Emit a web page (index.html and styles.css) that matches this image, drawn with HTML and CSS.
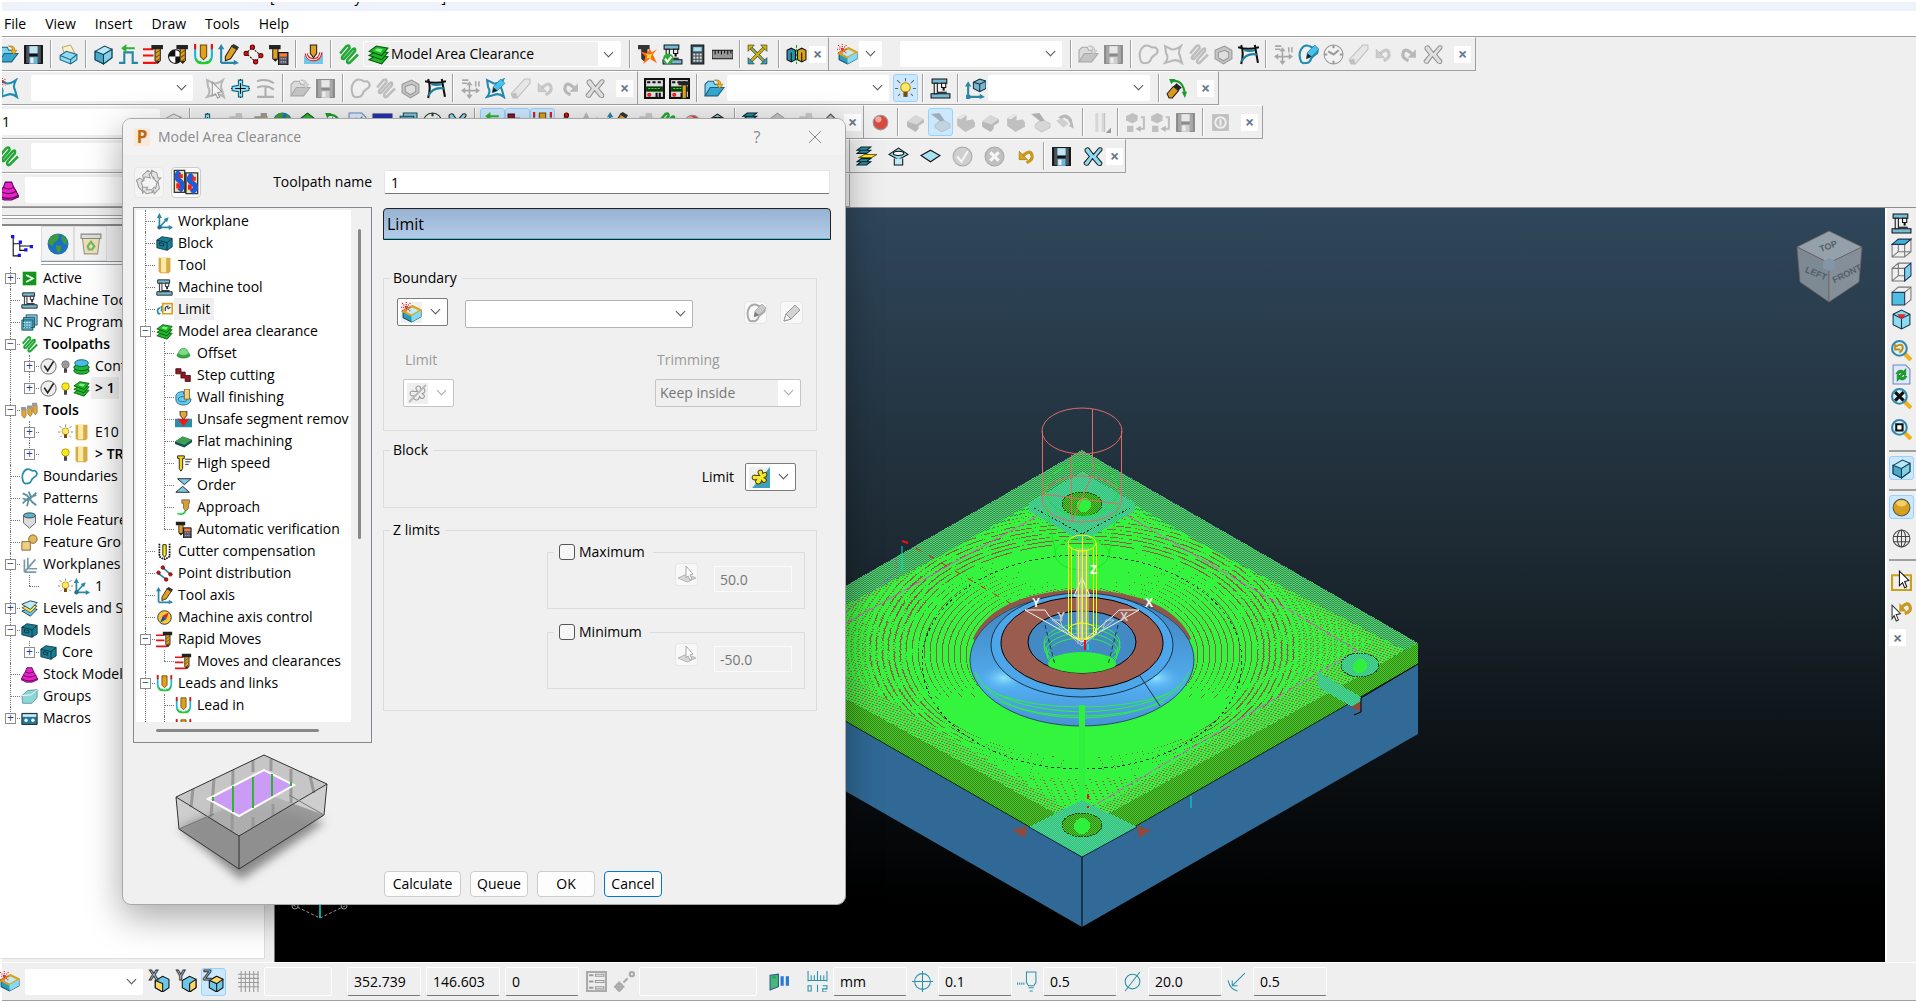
FILE: index.html
```html
<!DOCTYPE html>
<html lang="en">
<head>
<meta charset="utf-8">
<title>Model Area Clearance</title>
<link rel="stylesheet" href="styles.css">
</head>
<body>
<svg class="defs" aria-hidden="true">
<symbol id="open" viewBox="0 0 20 20"><path d="M1 17V6l3-3h5l1 3h5v4" fill="#7fd3ee" stroke="#1b5f7c"/><path d="M1 17 6 9h13l-6 8z" fill="#35a6cf" stroke="#1b5f7c"/><path d="M10 2q6-1 6 4h2l-3 4-3-4h2q0-3-4-4z" fill="#f4b51e" stroke="#9a6c00" stroke-width=".6"/></symbol>
<symbol id="save" viewBox="0 0 20 20"><path d="M1 1h18v18H1z" fill="#111"/><path d="M3 2h3v16H3zM14 2h3v16h-3z" fill="#4a5560"/><path d="M6 2h8v7H6z" fill="#bfe6f7"/><path d="M6 12h8v7H6z" fill="#6db6d6"/><path d="M7 13h3v5H7z" fill="#eee"/></symbol>
<symbol id="print" viewBox="0 0 20 20"><path d="M6 9 4 3l8-2 4 8z" fill="#fdf1c9" stroke="#a08848" stroke-width=".7"/><path d="m2 11 6-4 10 3v5l-6 4-10-4z" fill="#8fdaf5" stroke="#1f6685"/><path d="m2 11 10 4 6-5M12 15v4" fill="none" stroke="#1f6685"/></symbol>
<symbol id="block" viewBox="0 0 20 20"><path d="M2 7 11 2l7 3v8l-8 6-8-4z" fill="#b8e8f7" stroke="#0f3f54"/><path d="m2 7 8 3v9l-8-4z" fill="#4aa9c8" stroke="#0f3f54"/><path d="m10 10 8-5v8l-8 6z" fill="#86cfe6" stroke="#0f3f54"/></symbol>
<symbol id="feed" viewBox="0 0 20 20"><path d="M1 18h5V8h8v10h5" fill="none" stroke="#2587a8" stroke-width="2"/><path d="M16 5H8V8L3 4l5-4v3h8z" fill="#2db32d"/></symbol>
<symbol id="mill" viewBox="0 0 20 20"><path d="M8 1h11v4h-2v11l-3 3-3-3V5H8z" fill="#222"/><path d="M12 5h4v11h-4z" fill="#e0a020"/><path d="m12 9 4-3M12 13l4-3M12 17l4-3" stroke="#7a5200"/></symbol>
<symbol id="rapid" viewBox="0 0 20 20"><path d="M0 5h10M0 11h10M0 18h13" stroke="#f01010" stroke-width="2"/><use href="#mill"/></symbol>
<symbol id="half" viewBox="0 0 20 20"><circle cx="7" cy="12" r="6.500" fill="#fff" stroke="#111"/><path d="M7 12V5.500A6.500 6.500 0 0 0 .5 12zM7 12v6.500A6.500 6.500 0 0 0 13.500 12z" fill="#111"/><use href="#mill"/></symbol>
<symbol id="leads" viewBox="0 0 20 20"><path d="M2 1v10q0 7 6 6" fill="none" stroke="#18b8dc" stroke-width="2"/><path d="M18 1v10q0 7-6 6" fill="none" stroke="#18b8dc" stroke-width="2"/><path d="M3 14q1 5 7 4 6 1 7-4" fill="none" stroke="#22cc22" stroke-width="2"/><path d="M1 0h2v5H1zM17 0h2v5h-2z" fill="#f01010"/><path d="M7 1h6v11l-3 3-3-3z" fill="#e0a020" stroke="#6b4a00"/></symbol>
<symbol id="axis" viewBox="0 0 20 20"><path d="M4 17V3M4 17h14M4 17 12 8" stroke="#2a87a8" stroke-width="2" fill="none"/><path d="m1 6 3-6 3 6zM15 14l5 3-5 3zM9 7l6-2-2 6z" fill="#2a87a8"/><circle cx="4" cy="17" r="2.500" fill="#2a6f88"/></symbol>
<symbol id="taxis" viewBox="0 0 20 20"><path d="M3 18V3M3 18h15" stroke="#2a87a8" stroke-width="2" fill="none"/><path d="m0 5 3-5 3 5zM15 15l5 3-5 2z" fill="#2a87a8"/><path d="m7 12 6-10 5 3-6 9-5 2z" fill="#e0a020" stroke="#222"/><path d="m12 2 3-2 5 3-2 3z" fill="#333"/></symbol>
<symbol id="points" viewBox="0 0 20 20"><path d="M8 4 3 9l8 7M9 4l8 7-5 6" fill="none" stroke="#111" stroke-dasharray="2 1"/><g fill="#d81818" stroke="#600"><circle cx="9" cy="3" r="2"/><circle cx="3" cy="9" r="2"/><circle cx="12" cy="17" r="2"/><circle cx="17" cy="11" r="2"/></g></symbol>
<symbol id="pdist" viewBox="0 0 20 20"><path d="m3 10 9 7M8 3l9 8" stroke="#2a87a8" stroke-width="2"/><g fill="#d81818" stroke="#600"><circle cx="8" cy="3" r="2"/><circle cx="3" cy="9" r="2"/><circle cx="12" cy="17" r="2"/><circle cx="17" cy="11" r="2"/></g></symbol>
<symbol id="tcalc" viewBox="0 0 20 20"><path d="M1 1h11v4h-2v9l-3 3-3-3V5H1z" fill="#222"/><path d="M5 5h4v9H5z" fill="#e0a020"/><path d="M10 8h9v12h-9z" fill="#556" stroke="#111"/><path d="M11 9h7v3h-7z" fill="#ff7b30"/><path d="M12 14h6M12 17h6" stroke="#ddd" stroke-dasharray="1 1"/></symbol>
<symbol id="touch" viewBox="0 0 20 20"><path d="M1 10v9h18V7q-3 10-9 9-6 1-9-6z" fill="#6cc8ea"/><path d="M2 9q1 7 8 7t8-8M4 9q1 5 6 5t6-6" fill="none" stroke="#f01010"/><path d="M7 1h6v8l-3 4-3-4z" fill="#e0a020" stroke="#222"/></symbol>
<symbol id="path" viewBox="0 0 20 20"><path d="M2 9 8 2q3-2 3 2l-7 8q-1 3 2 2l8-9q3-2 2 2l-7 8q-1 4 2 3l8-8" fill="none" stroke="#23a838" stroke-width="2.400" stroke-linejoin="round"/></symbol>
<symbol id="layers" viewBox="0 0 20 20"><g fill="#22b52c" stroke="#045a0a"><path d="m1 15 6-4 12 1-6 7z"/><path d="m1 11 6-4 12 1-6 7z"/><path d="m1 7 7-5 11 2-6 7z"/></g><path d="m6 6 3-2 5 1-2 3z" fill="#7cf07c"/></symbol>
<symbol id="crash" viewBox="0 0 20 20"><path d="M1 1h11v4h-2v9l-3 3-3-3V5H1z" fill="#333"/><path d="m19 5-4 5 4 8-7-4-6 5 2-7-5-5 7 2 2-5 2 4z" fill="#ff6a10"/><path d="m15 9-2 3 1 3-3-2-2 1 1-3-2-2 3 1z" fill="#ffe040"/></symbol>
<symbol id="machine" viewBox="0 0 20 20"><path d="M2 1h14v4H2zM1 15h18v4H1z" fill="#78bcd4" stroke="#111"/><path d="M4 5h3v10H4zM11 5h4v4h-4z" fill="#eee" stroke="#111"/><path d="M13 9v3" stroke="#111" stroke-width="2"/><path d="M7 13h9v2H7z" fill="#333"/></symbol>
<symbol id="machok" viewBox="0 0 20 20"><use href="#machine"/><circle cx="6" cy="14" r="5" fill="#2dac35"/><path d="m3 14 2 3 4-5" stroke="#fff" fill="none" stroke-width="2"/></symbol>
<symbol id="calc" viewBox="0 0 20 20"><path d="M4 1h12v18H4z" fill="#3c4a52" stroke="#111"/><path d="M6 3h8v4H6z" fill="#a9dff0"/><path d="M6 10h9M6 13h9M6 16h9" stroke="#ddd" stroke-width="2" stroke-dasharray="2 1"/></symbol>
<symbol id="ruler" viewBox="0 0 20 20"><path d="M0 6h20v8H0z" fill="#999" stroke="#111"/><path d="M3 6v4M6 6v3M9 6v4M12 6v3M15 6v4M18 6v3" stroke="#111"/></symbol>
<symbol id="expand" viewBox="0 0 20 20"><path d="m3 3 14 14M17 3 3 17" stroke="#333" stroke-width="3"/><path d="m3 3 14 14" stroke="#9ab04a" stroke-width="2"/><path d="M17 3 3 17" stroke="#d6b900" stroke-width="2"/><path d="M1 7V1h6zM19 7V1h-6z" fill="#d6b900" stroke="#333" stroke-width=".6"/><path d="M1 13v6h6zM19 13v6h-6z" fill="#2aa0c8" stroke="#333" stroke-width=".6"/></symbol>
<symbol id="blocks" viewBox="0 0 20 20"><path d="m1 6 4-2 4 2v9l-4 2-4-2z" fill="#2e8fb0" stroke="#111"/><path d="m11 6 4-2 4 2v9l-4 2-4-2z" fill="#e0a020" stroke="#111"/><path d="M5 8v9M15 8v9" stroke="#111"/><path d="M10 1v18" stroke="#1a1" stroke-dasharray="3 1"/></symbol>
<symbol id="bdnew" viewBox="0 0 20 20"><path d="m2 9 9-5 8 4v6l-9 5-8-4z" fill="#2a9cc0" stroke="#0f4f66"/><path d="m2 9 9-5 8 4-9 5z" fill="#bfeaf7" stroke="#d9a41c" stroke-width="2"/><path d="m10 13v6l9-5V8z" fill="#86daf2"/><path d="M5 0v10M0 5h10M1 1l8 8M9 1 1 9" stroke="#e01010" stroke-dasharray="1 1"/></symbol>
<symbol id="bound" viewBox="0 0 20 20"><path d="M3 17Q0 10 3 5q3-5 8-3 2 2 5 1 4 2 2 6-3 2-5 4-2 6-6 5-2 1-4-1z" fill="none" stroke="#218bb0" stroke-width="2"/></symbol>
<symbol id="star" viewBox="0 0 20 20"><path d="m2 2 6 3q3 1 9-3-3 6-1 9l2 7q-5-4-9-2l-7 2q4-5 1-9z" fill="none" stroke="#218bb0" stroke-width="2"/></symbol>
<symbol id="starnew" viewBox="0 0 20 20"><use href="#star"/><path d="M4 0v8M0 4h8M1 1l6 6M7 1 1 7" stroke="#e01010" stroke-dasharray="1 1"/></symbol>
<symbol id="starcur" viewBox="0 0 20 20"><use href="#star"/><path d="m7 4 9 9-4 1 2 4-2 1-2-4-3 2z" fill="#fff" stroke="#333"/></symbol>
<symbol id="cross" viewBox="0 0 20 20"><path d="M10 1v18M1 10h18" stroke="#111"/><path d="M8 2h4v5l6 1v4l-6 1v5H8v-5l-6-1V8l6-1z" fill="#8fdcf2" stroke="#125d78"/><path d="M5 10h10M10 5v10" stroke="#111"/></symbol>
<symbol id="flow" viewBox="0 0 20 20"><path d="M2 3q9-3 16 2M2 9q9-3 16 2M2 18h16M10 17V8" fill="none" stroke="#567" stroke-width="2"/></symbol>
<symbol id="cube" viewBox="0 0 20 20"><path d="m2 6 9-4 7 4v8l-8 5-8-5z" fill="#4aa9c6" stroke="#134"/><path d="m5 8 6-2 4 2v5l-5 3-5-3z" fill="#bcd" stroke="#134"/></symbol>
<symbol id="curve" viewBox="0 0 20 20"><path d="M3 19Q6 9 3 1M0 3q10 3 20 0M16 1l3 17" fill="none" stroke="#111" stroke-width="2"/><path d="M3 17Q8 8 18 10M6 6q5 1 10 0" fill="none" stroke="#1f7f9e" stroke-width="2"/></symbol>
<symbol id="move" viewBox="0 0 20 20"><path d="M9 5v13M3 12h14M2 2h6M2 5h5M15 3v5M18 3v5" stroke="#456" stroke-width="1.500"/><path d="M9 3 6 7h6zM9 20l-3-4h6zM1 12l4-3v6zM19 12l-4-3v6z" fill="#456"/></symbol>
<symbol id="pencil" viewBox="0 0 20 20"><path d="m2 18 2-7 9-9 5 5-9 9z" fill="#bbb" stroke="#555"/><path d="m2 18 2-7 5 5z" fill="#fff" stroke="#555"/></symbol>
<symbol id="bdpen" viewBox="0 0 20 20"><use href="#bound"/><path d="m8 14 1-6 7-7 4 4-7 7z" fill="#48c0ee" stroke="#17698a" stroke-width=".6"/><path d="m8 14 1-5 4 3z" fill="#222"/></symbol>
<symbol id="starpen" viewBox="0 0 20 20"><use href="#star"/><path d="m7 14 1-6 7-7 4 4-7 7z" fill="#48c0ee" stroke="#17698a" stroke-width=".6"/><path d="m7 14 1-5 4 3z" fill="#222"/></symbol>
<symbol id="clock" viewBox="0 0 20 20"><circle cx="10" cy="10" r="9" fill="#eefaf0" stroke="#333"/><path d="M5 7l5 3 5-4M10 1v3M10 16v3M1 10h3M16 10h3" fill="none" stroke="#333" stroke-width="2"/></symbol>
<symbol id="eraser" viewBox="0 0 20 20"><path d="M1 15 14 1h5v4L7 19H3z" fill="#ddd" stroke="#888"/><path d="m1 15 5-1 1 5H3z" fill="#888"/></symbol>
<symbol id="undo" viewBox="0 0 20 20"><path d="M6 10q7-7 9-2t-5 8" fill="none" stroke="#c9981c" stroke-width="3"/><path d="M3 5v8h8z" fill="#d9a41c" stroke="#8a6500" stroke-width=".5"/></symbol>
<symbol id="redo" viewBox="0 0 20 20"><path d="M14 10Q7 3 5 8t5 8" fill="none" stroke="#777" stroke-width="3"/><path d="M17 5v8H9z" fill="#777"/></symbol>
<symbol id="del" viewBox="0 0 20 20"><path d="M2 3q3-3 5 1l3 4 5-6q4-1 3 2l-5 6 5 6q0 4-4 2l-5-6-4 6q-4 1-4-2l5-6-4-5z" fill="#8fdcf2" stroke="#222"/></symbol>
<symbol id="keypad" viewBox="0 0 20 20"><path d="M0 0h20v20H0z" fill="#111"/><path d="M2 2h16v16H2z" fill="#ddd"/><path d="M3 4h14" stroke="#111" stroke-width="2" stroke-dasharray="3 2"/><path d="M2 8h16v5H2z" fill="#0a3a0a"/><path d="M4 10h12" stroke="#2e2" stroke-dasharray="2 1"/><circle cx="5" cy="16" r="2" fill="#e22"/><path d="M12 14v4M15 14v4" stroke="#111" stroke-width="2"/></symbol>
<symbol id="keymill" viewBox="0 0 20 20"><use href="#keypad"/><path d="M9 3h10v4h-2v13h-5V7H9z" fill="#222"/><path d="M13 7h3v12h-3z" fill="#e0a020"/></symbol>
<symbol id="lamp" viewBox="0 0 20 20"><path d="M10 0v3M2 2l3 3M18 2l-3 3M0 10h3M17 10h3M3 17l2-2M17 17l-2-2" stroke="#666"/><circle cx="10" cy="9" r="4.500" fill="#ffe96a" stroke="#b58b00"/><path d="M8 13h4v5H8z" fill="#7a4a10"/></symbol>
<symbol id="bulb" viewBox="0 0 20 20"><circle cx="10" cy="8" r="5" fill="#f8e81c" stroke="#9a8a00"/><path d="M8 13h4v6H8z" fill="#444"/></symbol>
<symbol id="bulboff" viewBox="0 0 20 20"><circle cx="10" cy="8" r="5" fill="#999" stroke="#777"/><path d="M8 13h4v6H8z" fill="#444"/></symbol>
<symbol id="axcube" viewBox="0 0 20 20"><path d="M3 18V6M3 18h12" stroke="#2a87a8" stroke-width="2"/><path d="m0 8 3-5 3 5zM14 15l5 3-5 2zM1 16h4v4H1z" fill="#2a87a8"/><path d="m8 4 6-3 6 2v7l-6 3-6-3z" fill="#7bb6cc" stroke="#134"/><path d="m8 4 6 2 6-3M14 6v7" fill="none" stroke="#134"/></symbol>
<symbol id="rotate" viewBox="0 0 20 20"><path d="M6 3q10-2 12 12" fill="none" stroke="#1d9a2b" stroke-width="2"/><path d="M3 1h6L5 6zM15 13h5l-2 6z" fill="#1d9a2b"/><path d="m1 15 6-7 5 4-6 7H3z" fill="#d99a1c" stroke="#222"/><path d="m7 8 3-3 5 4-3 3z" fill="#222"/></symbol>
<symbol id="ball" viewBox="0 0 20 20"><circle cx="10" cy="10" r="7" fill="#d84a3e" stroke="#999"/><circle cx="8" cy="7" r="3" fill="#f7a79e"/></symbol>
<symbol id="gold" viewBox="0 0 20 20"><circle cx="10" cy="10" r="8" fill="#d5a01c" stroke="#555"/><ellipse cx="10" cy="6" rx="5" ry="3" fill="#f2cf6c"/></symbol>
<symbol id="sim" viewBox="0 0 20 20"><path d="m2 9 8-6 8 4v3l-5 3v3l-3 3-8-5z" fill="#777"/><path d="m2 9 8-6 8 4-7 5z" fill="#bbb"/></symbol>
<symbol id="simtop" viewBox="0 0 20 20"><path d="m5 12 6-5 8 4v4l-8 4-6-4z" fill="#bbb" stroke="#999"/><path d="m1 2 8-1 5 7-4 1z" fill="#666"/></symbol>
<symbol id="simcut" viewBox="0 0 20 20"><path d="m2 6 6-4 3 1v5l6-1 2 3v4l-9 5-8-6z" fill="#888"/><path d="m2 6 6-4 3 1-5 4z" fill="#ddd"/></symbol>
<symbol id="simrot" viewBox="0 0 20 20"><path d="M3 5q8-6 13 2l2 9-5-3 2-1-3-5q-4-3-6 0z" fill="#777"/><path d="m1 8 6-2 6 5-5 4z" fill="#aaa"/></symbol>
<symbol id="cyl" viewBox="0 0 20 20"><path d="M5 1h9v18H5z" fill="#bbb"/><path d="M8 1h3v18H8z" fill="#eee"/><path d="M14 1v18" stroke="#888"/><path d="M20 15v5h-5z" fill="#333"/></symbol>
<symbol id="loop" viewBox="0 0 20 20"><path d="m1 4 6-3 5 2v5L7 11 1 8zM2 13h6v6H2z" fill="#888"/><path d="M15 5h3v11h-6" fill="none" stroke="#888" stroke-width="2"/><path d="m10 16 5-3v6z" fill="#777"/></symbol>
<symbol id="power" viewBox="0 0 20 20"><path d="M2 2h16v16H2z" fill="#888"/><circle cx="10" cy="10" r="5" fill="none" stroke="#eee" stroke-width="2"/><path d="M10 7v6" stroke="#eee" stroke-width="2"/></symbol>
<symbol id="slices" viewBox="0 0 20 20"><g fill="#2d93a8" stroke="#08222a"><path d="m1 4 4-3h9l-4 3zM1 7l4-3h9l-4 3zM1 15l4-3h9l-4 3zM1 18l4-3h9l-4 3z"/></g><path d="m3 11 5-3h12l-5 3z" fill="#ffe73a" stroke="#776600"/></symbol>
<symbol id="hat" viewBox="0 0 20 20"><path d="m1 8 9-6 9 6-9 5z" fill="#8fdcf2" stroke="#111"/><ellipse cx="10" cy="7" rx="5" ry="2" fill="#fff" stroke="#111"/><path d="M6 12v6h8v-6" fill="#bfeaf7" stroke="#111"/></symbol>
<symbol id="diamond" viewBox="0 0 20 20"><path d="m1 9 9-5 9 5-9 6z" fill="#a8e2f5" stroke="#111"/></symbol>
<symbol id="okc" viewBox="0 0 20 20"><circle cx="10" cy="10" r="9" fill="#aaa" stroke="#555"/><path d="m5 10 4 5 6-10" fill="none" stroke="#fff" stroke-width="2"/></symbol>
<symbol id="noc" viewBox="0 0 20 20"><circle cx="10" cy="10" r="9" fill="#888" stroke="#555"/><path d="m6 6 8 8M14 6l-8 8" stroke="#fff" stroke-width="3"/></symbol>
<symbol id="stock" viewBox="0 0 20 20"><path d="M7 2h6l2 5 2 3 3 6-7 3H6l-6-3 3-6 2-3z" fill="#e822c8" stroke="#5a0050"/><path d="M5 7q5 3 10 0M3 11q7 4 14 0M1 15q9 5 18 0" fill="none" stroke="#5a0050"/></symbol>
<symbol id="green" viewBox="0 0 20 20"><path d="m1 8 9-7 9 7-4 8H5z" fill="#29b836" stroke="#064d0c"/></symbol>
<symbol id="table" viewBox="0 0 20 20"><path d="M1 2h18v16H1z" fill="#fff" stroke="#1a1a6a"/><path d="M1 2h18v5H1z" fill="#2233aa"/></symbol>
<symbol id="refresh" viewBox="0 0 20 20"><path d="M2 1h12l4 4v14H2z" fill="#dfe9ff" stroke="#6f83c0"/><path d="M5 9q3-5 7-2l2-2v5H9l2-1q-3-2-4 1zM15 12q-3 5-7 2l-2 2v-5h5l-2 1q3 2 4-1z" fill="#1e9a2b" stroke="#1e9a2b"/></symbol>
<symbol id="tree" viewBox="0 0 20 20"><path d="M2 2v17h6M2 8h6M8 6v8h5M8 10h10" fill="none" stroke="#111"/><path d="M0 0h3v3H0zM7 5h3v3H7zM17 9h3v3h-3zM12 12h3v3h-3zM6 17h3v3H6z" fill="#1414f0"/></symbol>
<symbol id="globe" viewBox="0 0 20 20"><circle cx="10" cy="10" r="9.500" fill="#1f6fc0"/><path d="M3 4q4-4 8-3l-1 5-4 3-1 3-4-3zM8 11l5 1-1 6-3-1zM14 2l4 4v5l-3-2-2-4z" fill="#3f9c35"/></symbol>
<symbol id="bin" viewBox="0 0 20 20"><path d="M2 3h16l-2 16H4z" fill="#f1dfae" stroke="#999"/><path d="M1 1h18v4H1z" fill="#ddd" stroke="#888"/><path d="m7 12 3-4 3 4-2 3H8z" fill="none" stroke="#6cb86c" stroke-width="2"/></symbol>
<symbol id="active" viewBox="0 0 20 20"><path d="M2 2h16v16H2z" fill="#109618"/><path d="m6 6 8 4-8 4" fill="none" stroke="#fff" stroke-width="2"/></symbol>
<symbol id="nc" viewBox="0 0 20 20"><path d="M6 1h13v12H6z" fill="#8fc8da" stroke="#134d60"/><path d="M3 4h13v12H3zM1 7h13v12H1z" fill="#57a7c0" stroke="#134d60"/><path d="M3 10h9M3 13h9M3 16h9" stroke="#e8f8ff" stroke-dasharray="2 1"/></symbol>
<symbol id="contour" viewBox="0 0 20 20"><g fill="#1fb83a" stroke="#064d0c"><ellipse cx="10" cy="15" rx="9" ry="4"/><ellipse cx="10" cy="11" rx="9" ry="4"/></g><ellipse cx="10" cy="6" rx="8" ry="4" fill="#48c0e0" stroke="#0f4f66"/></symbol>
<symbol id="tick" viewBox="0 0 20 20"><circle cx="10" cy="10" r="9" fill="#eee" stroke="#555"/><path d="m5 9 4 6 7-11" fill="none" stroke="#222" stroke-width="2"/></symbol>
<symbol id="tools" viewBox="0 0 20 20"><g fill="#e0a93a" stroke="#7a5a20" stroke-width=".7"><path d="M1 8h5v8l-2 3-3-3zM8 6h5v8l-2 3-3-3zM14 4h5v8l-2 3-3-3z"/></g><path d="M0 6h6v4H0zM7 4h6v4H7zM13 1h6v4h-6z" fill="#999"/></symbol>
<symbol id="endmill" viewBox="0 0 20 20"><path d="M3 1h14v16l-2 2H5l-2-2z" fill="#d8ac45"/><path d="M6 1h6v17H6z" fill="#fbe9a6"/></symbol>
<symbol id="pattern" viewBox="0 0 20 20"><path d="M2 4q6 2 8 6t8 8M2 16q6-8 16-10M9 2l3 7 6-6M2 10l7 2-2 7" fill="none" stroke="#5d8fa0" stroke-width="2"/></symbol>
<symbol id="hole" viewBox="0 0 20 20"><path d="M3 4v9l7 6 7-6V4" fill="#ddd" stroke="#555"/><ellipse cx="10" cy="4" rx="7" ry="3" fill="#5cb3cf" stroke="#333"/></symbol>
<symbol id="feat" viewBox="0 0 20 20"><circle cx="14" cy="6" r="5" fill="#e0b860" stroke="#7a5a20"/><path d="M1 9h10v10H1z" fill="#f0d080" stroke="#7a5a20"/></symbol>
<symbol id="wps" viewBox="0 0 20 20"><path d="M4 19V4M4 19h14M4 19 17 4M8 15V2M8 15h11" stroke="#7c9aa6" stroke-width="2"/></symbol>
<symbol id="levels" viewBox="0 0 20 20"><path d="m1 13 10-4 8 2-8 8z" fill="#6cc8ea" stroke="#134"/><path d="m1 9 10-4 8 2-8 8z" fill="#f4e04a" stroke="#554"/><path d="m1 5 10-4 8 2-8 8z" fill="#bfeaf7" stroke="#134"/></symbol>
<symbol id="model" viewBox="0 0 20 20"><path d="m1 6 6-4 12 2v10l-6 4-12-3z" fill="#1b7d92" stroke="#06323c"/><path d="m1 6 12 3 6-5M13 9v9M4 9l5 1v3l-5-1z" fill="none" stroke="#06323c"/></symbol>
<symbol id="group" viewBox="0 0 20 20"><path d="m1 9 7-6 11-1v9l-6 7H2z" fill="#8ed6d6" stroke="#5b8f9a"/><path d="m1 9 11-1 7-6" fill="none" stroke="#fff"/></symbol>
<symbol id="macro" viewBox="0 0 20 20"><path d="M1 4h18v13H1z" fill="#247a9a" stroke="#111"/><path d="M2 5h16v3H2z" fill="#cfeffa"/><circle cx="6" cy="12" r="2" fill="#fff"/><circle cx="14" cy="12" r="2" fill="#fff"/></symbol>
<symbol id="limit" viewBox="0 0 20 20"><path d="M5 8q-4 1-3 5t3 1M6 6q2 3 0 6" stroke="#2a87a8" stroke-width="2" fill="none"/><path d="M8 3h11v12H8z" fill="#fff" stroke="#d9a41c" stroke-width="2"/><path d="M11 12q-1-6 3-6-1 6 3 1" fill="none" stroke="#345" stroke-width="1.500"/></symbol>
<symbol id="offset" viewBox="0 0 20 20"><ellipse cx="10" cy="12" rx="8" ry="4" fill="#37a23f"/><path d="M4 11q1-7 6-7t6 7q-6 3-12 0z" fill="#7fdc84" stroke="#37a23f"/></symbol>
<symbol id="step" viewBox="0 0 20 20"><path d="M1 2h6v4h5v4h6v7h-6v-4H7V8H1z" fill="#8c1c24" stroke="#4a0a10"/></symbol>
<symbol id="wall" viewBox="0 0 20 20"><path d="M1 8q1-5 9-5v3l9 6q-1 7-10 7-8-1-8-7z" fill="#6cc8ea" stroke="#17698a"/><ellipse cx="9" cy="12" rx="5" ry="3" fill="none" stroke="#17698a"/><path d="M11 0h6v12h-6z" fill="#f0d080" stroke="#7a5a20"/></symbol>
<symbol id="unsafe" viewBox="0 0 20 20"><path d="M0 9h5l5 7 5-7h5v10H0z" fill="#2b8ea8"/><path d="m3 9h14l-7 9z" fill="#f01818"/><path d="M6 0h8v5l-4 5-4-5z" fill="#e0a93a" stroke="#222"/></symbol>
<symbol id="flat" viewBox="0 0 20 20"><path d="m0 10 9-6 11 4v3l-9 6-11-4z" fill="#154d5c"/><path d="m0 10 9-6 11 4-9 6z" fill="#3f9f50"/></symbol>
<symbol id="speed" viewBox="0 0 20 20"><path d="M3 1h8v3H9v12l-2 3-2-3V4H3z" fill="#f6d61c" stroke="#111"/><path d="M12 5h8M12 8h6M12 11h4" stroke="#111"/></symbol>
<symbol id="order" viewBox="0 0 20 20"><path d="M3 2h16l-8 7zM1 18h16l-8-7z" fill="#7ccce8" stroke="#111"/></symbol>
<symbol id="approach" viewBox="0 0 20 20"><path d="M3 17q9 3 10-6" fill="none" stroke="#22cc44" stroke-width="2"/><path d="M8 1h9v4h-1v6l-3 3-3-3V5H8z" fill="#d9a030" stroke="#765"/></symbol>
<symbol id="cutter" viewBox="0 0 20 20"><path d="M8 2h4v12l-2 3-2-3z" fill="#f6e41c" stroke="#111"/><path d="M4 1v15l5 3h2l5-3V1" fill="none" stroke="#111" stroke-width="2" stroke-dasharray="2 1"/></symbol>
<symbol id="compass" viewBox="0 0 20 20"><circle cx="10" cy="10" r="8" fill="#f6c73c" stroke="#222"/><path d="m15 4-3 8-4-4z" fill="#d22"/><path d="m5 16 3-8 4 4z" fill="#1b4fa0"/></symbol>
<symbol id="recycle" viewBox="0 0 20 20"><g fill="#e2e2e2" stroke="#9a9a9a" stroke-width=".8"><path d="m5 5 4-4 3 2-2 1 1 3-4-1-1 2z"/><path d="m12 1 4 2 1 4h2l-3 3-3-3h1l-2-2z"/><path d="m17 10 1 5-3 3-1 1-1-4 1-1 1 1 1-4z"/><path d="m13 18-5 1-2-2-1 2v-5h4l-1 2h4z"/><path d="m5 17-3-3-1-4-1-1 3-2 3 2-2 1 1 3z"/></g></symbol>
<symbol id="sheets" viewBox="0 0 20 20"><path d="M1 1h8v17H1zM10 3h9v16h-9z" fill="#f3e3a0" stroke="#333"/><path d="M5 2q-4 4 0 7t0 8M15 4q-5 4 0 7t-1 7" fill="none" stroke="#1f5bd8" stroke-width="4"/><path d="M6 4v3M4 11v4M16 6v3M13 12v4" stroke="#e22" stroke-width="3"/></symbol>
<symbol id="plane" viewBox="0 0 20 20"><path d="m1 13 9-4 9 4-9 4z" fill="#c5c5c5" stroke="#888"/><path d="M9 13V1l7 8-3 1 2 4-2 1-2-4z" fill="#fff" stroke="#777"/></symbol>
<symbol id="clover" viewBox="0 0 20 20"><path d="M20 0v20H3z" fill="#3f9fc0"/><path d="M10 8Q7 4 10 3t3 3q4-2 4 1t-3 3q4 2 2 4t-4-1q-1 4-4 3t-1-4q-4 1-4-2t4-2z" fill="#f2ea2c" stroke="#554400"/></symbol>
<symbol id="noclover" viewBox="0 0 20 20"><path d="M10 8Q7 4 10 3t3 3q4-2 4 1t-3 3q4 2 2 4t-4-1q-1 4-4 3t-1-4q-4 1-4-2t4-2z" fill="#eee" stroke="#999"/><path d="M2 18 18 2" stroke="#bbb" stroke-width="2"/></symbol>
<symbol id="vtop" viewBox="0 0 20 20"><path d="M1 7h12v12H1zM13 7l6-5v12l-6 5M7 2v12M7 14h12M7 14l-6 5" fill="none" stroke="#777"/><path d="m1 7 6-5h12l-6 5z" fill="#3fb2dc" stroke="#235"/></symbol>
<symbol id="vside" viewBox="0 0 20 20"><path d="M1 7h12v12H1zM1 7l6-5h12M7 2v12M7 14h12M7 14l-6 5" fill="none" stroke="#777"/><path d="m13 7 6-5v12l-6 5z" fill="#7fd0ec" stroke="#235"/></symbol>
<symbol id="vfront" viewBox="0 0 20 20"><path d="m1 7 6-5h12v12l-6 5" fill="none" stroke="#777"/><path d="M13 7l6-5" stroke="#777"/><path d="M1 7h12v12H1z" fill="#4fbde2" stroke="#235"/></symbol>
<symbol id="viso" viewBox="0 0 20 20"><path d="m2 5 8-4 8 4v10l-8 4-8-4z" fill="#8fdcf2" stroke="#134"/><path d="m2 5 8 4 8-4M10 9v10" fill="none" stroke="#134"/><path d="M6 5h8l-4 5z" fill="#e22"/></symbol>
<symbol id="lens" viewBox="0 0 20 20"><path d="m13 13 6 6" stroke="#efb322" stroke-width="4"/><circle cx="8" cy="8" r="7" fill="#d8f1fb" stroke="#3787a8" stroke-width="2"/></symbol>
<symbol id="zundo" viewBox="0 0 20 20"><use href="#lens"/><path d="M5 6q5-3 6 0t-3 6M4 4v5h5" fill="none" stroke="#c0901c" stroke-width="2"/></symbol>
<symbol id="zfit" viewBox="0 0 20 20"><use href="#lens"/><path d="m4 4 8 8M12 4l-8 8" stroke="#111" stroke-width="3"/></symbol>
<symbol id="zbox" viewBox="0 0 20 20"><use href="#lens"/><path d="M5 5h6v6H5z" fill="#fff" stroke="#111" stroke-width="2"/></symbol>
<symbol id="wire" viewBox="0 0 20 20"><g fill="none" stroke="#444"><circle cx="10" cy="10" r="8"/><ellipse cx="10" cy="10" rx="4" ry="8"/><path d="M2 8h16M2 13h16M10 2v16"/></g></symbol>
<symbol id="selbox" viewBox="0 0 20 20"><path d="M1 5h18v14H1z" fill="none" stroke="#c9a21c" stroke-width="2"/><path d="m8 1 9 9-4 1 2 5-2 1-2-5-3 3z" fill="#fff" stroke="#111"/></symbol>
<symbol id="selundo" viewBox="0 0 20 20"><path d="m1 4 8 8-4 1 2 5-2 1-2-5-2 3z" fill="#fff" stroke="#333"/><path d="M10 6q6-6 8-1t-5 7" fill="none" stroke="#c9981c" stroke-width="3"/><path d="M8 2v8h7z" fill="#c9981c"/></symbol>
<symbol id="plx" viewBox="0 0 20 20"><path d="m6 9 7-4 6 3v8l-6 4-7-4z" fill="#6cc8ea" stroke="#111"/><path d="m6 9 7 3v8l-7-4z" fill="#ffd86a" stroke="#111"/></symbol>
<symbol id="ply" viewBox="0 0 20 20"><path d="m6 9 7-4 6 3v8l-6 4-7-4z" fill="#6cc8ea" stroke="#111"/><path d="m13 12 6-4v8l-6 4z" fill="#ffd86a" stroke="#111"/></symbol>
<symbol id="plz" viewBox="0 0 20 20"><path d="m6 9 7-4 6 3v8l-6 4-7-4z" fill="#6cc8ea" stroke="#111"/><path d="m6 9 7-4 6 3-6 4zM13 12v8" fill="#ffd86a" stroke="#111"/></symbol>
<symbol id="grid" viewBox="0 0 20 20"><path d="M0 3h20M0 7h20M0 11h20M0 15h20M3 0v20M7 0v20M11 0v20M15 0v20M19 0v20" stroke="#999"/></symbol>
<symbol id="xyz" viewBox="0 0 20 20"><path d="M1 1h18v18H1z" fill="#eee" stroke="#aaa" stroke-width="2"/><path d="M3 4h4M3 10h4M3 16h4" stroke="#999" stroke-width="2"/><path d="M9 3h8v2H9zM9 9h8v2H9zM9 15h8v2H9z" fill="none" stroke="#999"/></symbol>
<symbol id="vec" viewBox="0 0 20 20"><g fill="none" stroke="#aaa" stroke-width="2"><circle cx="5" cy="15" r="3"/><circle cx="17" cy="3" r="2"/><path d="M0 15h10M5 10v10M9 11l4-4"/></g></symbol>
<symbol id="book" viewBox="0 0 20 20"><path d="m1 4 8-1v12l-8 3z" fill="#48b878" stroke="#2a5a8a"/><path d="M3 6h4" stroke="#1a6" stroke-width="2"/><path d="M11 5h3v9h-3zM16 5h3v9h-3z" fill="#2878d8"/></symbol>
<symbol id="units" viewBox="0 0 20 20"><path d="M1 0v10M19 0v10M10 0v9M4 4v5M7 4v5M13 4v5M16 4v5M1 9h18" stroke="#2a93ac" fill="none"/><path d="M1 14h3v5H1zM10 13v7M15 14h4v3h-4v3h4" fill="none" stroke="#2a93ac"/></symbol>
<symbol id="target" viewBox="0 0 20 20"><g fill="none" stroke="#2a93ac"><circle cx="10" cy="10" r="7.500"/><path d="M10 0v20M0 10h20"/></g></symbol>
<symbol id="thick" viewBox="0 0 20 20"><path d="M9 1h9v10l-2 3h-5l-2-3zM11 16h5M12 19h3" fill="none" stroke="#2a93ac"/><path d="M0 12h8" stroke="#2a93ac" stroke-width="2" stroke-dasharray="1 1"/></symbol>
<symbol id="dia" viewBox="0 0 20 20"><g fill="none" stroke="#2a93ac"><circle cx="10" cy="10" r="7"/><path d="M3 19 17 1"/></g></symbol>
<symbol id="rad" viewBox="0 0 20 20"><path d="M1 9q2 9 9 10M17 2 5 14M5 9v5h5" fill="none" stroke="#2a93ac"/></symbol>
</svg>

<header class="titlebar" aria-hidden="true"><span>[</span><span>y</span><span>]</span></header>
<nav class="menu"><a href="#">File</a><a href="#">View</a><a href="#">Insert</a><a href="#">Draw</a><a href="#">Tools</a><a href="#">Help</a></nav>

<div class="dock">
<div class="dockrow">
<div class="bar cut">
<button class="tb" aria-label="Open"><svg><use href="#open"/></svg></button><button class="tb" aria-label="Save"><svg><use href="#save"/></svg></button><i class="sep"></i>
<button class="tb" aria-label="Print"><svg><use href="#print"/></svg></button><i class="sep"></i>
<button class="tb" aria-label="Block"><svg><use href="#block"/></svg></button><button class="tb" aria-label="Feeds"><svg><use href="#feed"/></svg></button><button class="tb" aria-label="Rapids"><svg><use href="#rapid"/></svg></button><button class="tb" aria-label="Start point"><svg><use href="#half"/></svg></button><button class="tb" aria-label="Leads"><svg><use href="#leads"/></svg></button><button class="tb" aria-label="Tool axis"><svg><use href="#taxis"/></svg></button><button class="tb" aria-label="Points"><svg><use href="#points"/></svg></button><button class="tb" aria-label="Verify"><svg><use href="#tcalc"/></svg></button><i class="sep"></i>
<button class="tb" aria-label="Thickness"><svg><use href="#touch"/></svg></button><i class="sep"></i>
<button class="tb" aria-label="Strategies"><svg><use href="#path"/></svg></button>
<div class="combo w258 filled"><svg><use href="#layers"/></svg><select aria-label="Strategy"><option>Model Area Clearance</option></select></div><span class="gap4"></span><i class="sep"></i>
<button class="tb" aria-label="Collision"><svg><use href="#crash"/></svg></button><button class="tb" aria-label="Machine check"><svg><use href="#machok"/></svg></button><button class="tb" aria-label="Calculator"><svg><use href="#calc"/></svg></button><button class="tb" aria-label="Measure"><svg><use href="#ruler"/></svg></button><i class="sep"></i>
<button class="tb" aria-label="Expand"><svg><use href="#expand"/></svg></button><span class="gap4"></span><i class="sep"></i>
<button class="tb" aria-label="Mirror"><svg><use href="#blocks"/></svg></button><button class="x" aria-label="Close bar"></button>
</div>
<div class="bar">
<div class="combo w49 tight"><svg><use href="#bdnew"/></svg><select aria-label="New boundary"><option></option></select></div><span class="gap18"></span>
<div class="combo w162"><select aria-label="Boundary"><option></option></select></div><span class="gap4"></span><i class="sep"></i>
<button class="tb" disabled aria-label="Open"><svg><use href="#open"/></svg></button><button class="tb" disabled aria-label="Save"><svg><use href="#save"/></svg></button><i class="sep"></i>
<button class="tb" disabled aria-label="Boundary"><svg><use href="#bound"/></svg></button><button class="tb" disabled aria-label="Pattern"><svg><use href="#star"/></svg></button><button class="tb" disabled aria-label="Toolpath"><svg><use href="#path"/></svg></button><button class="tb" disabled aria-label="Model"><svg><use href="#cube"/></svg></button><button class="tb" aria-label="Curve"><svg><use href="#curve"/></svg></button><i class="sep"></i>
<button class="tb" disabled aria-label="Move"><svg><use href="#move"/></svg></button><button class="tb" aria-label="Sketch"><svg><use href="#bdpen"/></svg></button><button class="tb" disabled aria-label="Time"><svg><use href="#clock"/></svg></button><button class="tb" disabled aria-label="Erase"><svg><use href="#eraser"/></svg></button><button class="tb" disabled aria-label="Undo"><svg><use href="#undo"/></svg></button><button class="tb" disabled aria-label="Redo"><svg><use href="#redo"/></svg></button><button class="tb" disabled aria-label="Delete"><svg><use href="#del"/></svg></button><button class="x far" aria-label="Close bar"></button>
</div>
</div>

<div class="dockrow">
<div class="bar cut">
<button class="tb" aria-label="New pattern"><svg><use href="#starnew"/></svg></button><span class="gap10"></span><div class="combo w162"><select aria-label="Pattern"><option></option></select></div><span class="gap10"></span>
<button class="tb" disabled aria-label="Select"><svg><use href="#starcur"/></svg></button><button class="tb" aria-label="Cross"><svg><use href="#cross"/></svg></button><button class="tb" disabled aria-label="Flow"><svg><use href="#flow"/></svg></button><i class="sep"></i>
<button class="tb" disabled aria-label="Open"><svg><use href="#open"/></svg></button><button class="tb" disabled aria-label="Save"><svg><use href="#save"/></svg></button><i class="sep"></i>
<button class="tb" disabled aria-label="Boundary"><svg><use href="#bound"/></svg></button><button class="tb" disabled aria-label="Toolpath"><svg><use href="#path"/></svg></button><button class="tb" disabled aria-label="Model"><svg><use href="#cube"/></svg></button><button class="tb" aria-label="Curve"><svg><use href="#curve"/></svg></button><i class="sep"></i>
<button class="tb" disabled aria-label="Move"><svg><use href="#move"/></svg></button><button class="tb" aria-label="Sketch"><svg><use href="#starpen"/></svg></button><button class="tb" disabled aria-label="Erase"><svg><use href="#eraser"/></svg></button><button class="tb" disabled aria-label="Undo"><svg><use href="#undo"/></svg></button><button class="tb" disabled aria-label="Redo"><svg><use href="#redo"/></svg></button><button class="tb" disabled aria-label="Delete"><svg><use href="#del"/></svg></button><button class="x far" aria-label="Close bar"></button>
</div>
<div class="bar">
<button class="tb" aria-label="Controller"><svg><use href="#keypad"/></svg></button><button class="tb" aria-label="Controller tool"><svg><use href="#keymill"/></svg></button><i class="sep"></i>
<button class="tb" aria-label="Open macro"><svg><use href="#open"/></svg></button><div class="combo w162"><select aria-label="Machine"><option></option></select></div><span class="gap4"></span><button class="tb on" aria-label="Light"><svg><use href="#lamp"/></svg></button><i class="sep"></i>
<button class="tb" aria-label="Machine"><svg><use href="#machine"/></svg></button><i class="sep"></i>
<button class="tb" aria-label="Workplane"><svg><use href="#axcube"/></svg></button><div class="combo w162"><select aria-label="Workplane name"><option></option></select></div><span class="gap4"></span><i class="sep"></i>
<button class="tb" aria-label="Tilt"><svg><use href="#rotate"/></svg></button><button class="x far" aria-label="Close bar"></button>
</div>
</div>

<div class="dockrow">
<div class="bar flush">
<div class="combo w158"><select aria-label="Active toolpath"><option>1</option></select></div>
<button class="tb" disabled aria-label="Stock"><svg><use href="#block"/></svg></button><i class="sep"></i>
<button class="tb" aria-label="Point edit"><svg><use href="#cross"/></svg></button><button class="tb" disabled aria-label="Tool list"><svg><use href="#tools"/></svg></button><button class="tb" aria-label="Tools"><svg><use href="#tools"/></svg></button><button class="tb" aria-label="Remove"><svg><use href="#globe"/></svg></button><button class="tb" aria-label="Reorder"><svg><use href="#green"/></svg></button><button class="tb" aria-label="Reverse"><svg><use href="#rotate"/></svg></button><button class="tb" aria-label="Recalculate"><svg><use href="#refresh"/></svg></button><button class="tb" aria-label="Table"><svg><use href="#table"/></svg></button><button class="tb" aria-label="Copy"><svg><use href="#nc"/></svg></button><button class="tb" aria-label="Time"><svg><use href="#clock"/></svg></button><button class="tb" aria-label="Delete"><svg><use href="#del"/></svg></button><i class="sep"></i>
<button class="tb on" aria-label="Cutting"><svg><use href="#feed"/></svg></button><button class="tb on" aria-label="Links"><svg><use href="#step"/></svg></button><button class="tb on" aria-label="Show leads"><svg><use href="#leads"/></svg></button><button class="tb" aria-label="Show points"><svg><use href="#points"/></svg></button><button class="tb" disabled aria-label="Vectors"><svg><use href="#axis"/></svg></button><button class="tb" aria-label="Show axis"><svg><use href="#taxis"/></svg></button><button class="tb" disabled aria-label="Tools"><svg><use href="#tools"/></svg></button><button class="tb" aria-label="Path"><svg><use href="#path"/></svg></button><button class="tb" aria-label="Alarm"><svg><use href="#ball"/></svg></button><button class="tb" aria-label="Teal"><svg><use href="#hat"/></svg></button><i class="sep"></i>
<button class="tb" aria-label="Slices"><svg><use href="#slices"/></svg></button><button class="tb" disabled aria-label="Up"><svg><use href="#green"/></svg></button><button class="tb" disabled aria-label="Tools"><svg><use href="#tools"/></svg></button><button class="tb" aria-label="Draw"><svg><use href="#pencil"/></svg></button><span class="gap4"></span><button class="x" aria-label="Close bar"></button>
</div>
<div class="bar">
<button class="tb" aria-label="Record"><svg><use href="#ball"/></svg></button><i class="sep"></i>
<button class="tb" disabled aria-label="Shaded"><svg><use href="#sim"/></svg></button><button class="tb on" aria-label="Top"><svg class="dim"><use href="#simtop"/></svg></button><button class="tb" disabled aria-label="Cut"><svg><use href="#simcut"/></svg></button><button class="tb" disabled aria-label="Solid"><svg><use href="#sim"/></svg></button><button class="tb" disabled aria-label="Cut side"><svg><use href="#simcut"/></svg></button><button class="tb" disabled aria-label="Round"><svg><use href="#simtop"/></svg></button><button class="tb" disabled aria-label="Rotate"><svg><use href="#simrot"/></svg></button><i class="sep"></i>
<button class="tb" disabled aria-label="Cylinder"><svg><use href="#cyl"/></svg></button><i class="sep"></i>
<button class="tb" disabled aria-label="Store"><svg><use href="#loop"/></svg></button><button class="tb" disabled aria-label="Restore"><svg><use href="#loop"/></svg></button><button class="tb" disabled aria-label="Save"><svg><use href="#save"/></svg></button><i class="sep"></i>
<button class="tb" disabled aria-label="Exit"><svg><use href="#power"/></svg></button><button class="x far" aria-label="Close bar"></button>
</div>
</div>

<div class="dockrow">
<div class="bar cut w850"><button class="tb" aria-label="Toolpath"><svg><use href="#path"/></svg></button><span class="gap10"></span><div class="combo w162"><select aria-label="Toolpath"><option></option></select></div></div>
<div class="bar wide">
<button class="tb" aria-label="Slices"><svg><use href="#slices"/></svg></button><button class="tb" aria-label="Hole"><svg><use href="#hat"/></svg></button><button class="tb" aria-label="Plane"><svg><use href="#diamond"/></svg></button><button class="tb" disabled aria-label="Accept"><svg><use href="#okc"/></svg></button><button class="tb" disabled aria-label="Reject"><svg><use href="#noc"/></svg></button><button class="tb" aria-label="Undo"><svg><use href="#undo"/></svg></button><i class="sep"></i>
<button class="tb" aria-label="Save"><svg><use href="#save"/></svg></button><button class="tb" aria-label="Delete"><svg><use href="#del"/></svg></button><button class="x" aria-label="Close bar"></button>
</div>
</div>

<div class="dockrow">
<div class="bar cut w850"><button class="tb" aria-label="Stock model"><svg><use href="#stock"/></svg></button><span class="gap4"></span><div class="combo w162"><select aria-label="Stock model name"><option></option></select></div></div>
</div>
</div>

<main class="work">
<aside class="explorer">
<div class="grip"></div>
<div class="tabs"><button class="tab cur" aria-label="Explorer"><svg><use href="#tree"/></svg></button><button class="tab" aria-label="Web"><svg><use href="#globe"/></svg></button><button class="tab" aria-label="Recycle bin"><svg><use href="#bin"/></svg></button></div>
<ul class="tree side">
<li><div class="row"><span class="g"><button aria-label="Expand">+</button></span><svg><use href="#active"/></svg><span class="t">Active</span></div></li>
<li><div class="row"><span class="g"></span><svg><use href="#machine"/></svg><span class="t">Machine Tools</span></div></li>
<li><div class="row"><span class="g"></span><svg><use href="#nc"/></svg><span class="t">NC Programs</span></div></li>
<li><div class="row"><span class="g"><button aria-label="Collapse">−</button></span><svg><use href="#path"/></svg><span class="t b">Toolpaths</span></div>
<ul><li><div class="row"><span class="g"><button aria-label="Expand">+</button></span><svg><use href="#tick"/></svg><svg class="s"><use href="#bulboff"/></svg><svg><use href="#contour"/></svg><span class="t">Cont</span></div></li>
<li><div class="row"><span class="g"><button aria-label="Expand">+</button></span><svg><use href="#tick"/></svg><svg class="s"><use href="#bulb"/></svg><svg><use href="#layers"/></svg><span class="t b sel">&gt; 1</span></div></li></ul></li>
<li><div class="row"><span class="g"><button aria-label="Collapse">−</button></span><svg><use href="#tools"/></svg><span class="t b">Tools</span></div>
<ul><li><div class="row"><span class="g"><button aria-label="Expand">+</button></span><span class="pad"></span><svg class="s"><use href="#lamp"/></svg><svg><use href="#endmill"/></svg><span class="t">E10</span></div></li>
<li><div class="row"><span class="g"><button aria-label="Expand">+</button></span><span class="pad"></span><svg class="s"><use href="#bulb"/></svg><svg><use href="#endmill"/></svg><span class="t b">&gt; TR</span></div></li></ul></li>
<li><div class="row"><span class="g"></span><svg><use href="#bound"/></svg><span class="t">Boundaries</span></div></li>
<li><div class="row"><span class="g"></span><svg><use href="#pattern"/></svg><span class="t">Patterns</span></div></li>
<li><div class="row"><span class="g"></span><svg><use href="#hole"/></svg><span class="t">Hole Features</span></div></li>
<li><div class="row"><span class="g"></span><svg><use href="#feat"/></svg><span class="t">Feature Groups</span></div></li>
<li><div class="row"><span class="g"><button aria-label="Collapse">−</button></span><svg><use href="#wps"/></svg><span class="t">Workplanes</span></div>
<ul><li><div class="row"><span class="g"></span><span class="pad"></span><svg class="s"><use href="#lamp"/></svg><svg><use href="#axis"/></svg><span class="t">1</span></div></li></ul></li>
<li><div class="row"><span class="g"><button aria-label="Expand">+</button></span><svg><use href="#levels"/></svg><span class="t">Levels and Sets</span></div></li>
<li><div class="row"><span class="g"><button aria-label="Collapse">−</button></span><svg><use href="#model"/></svg><span class="t">Models</span></div>
<ul><li><div class="row"><span class="g"><button aria-label="Expand">+</button></span><svg><use href="#model"/></svg><span class="t">Core</span></div></li></ul></li>
<li><div class="row"><span class="g"></span><svg><use href="#stock"/></svg><span class="t">Stock Models</span></div></li>
<li><div class="row"><span class="g"></span><svg><use href="#group"/></svg><span class="t">Groups</span></div></li>
<li><div class="row"><span class="g"><button aria-label="Expand">+</button></span><svg><use href="#macro"/></svg><span class="t">Macros</span></div></li>
</ul>
</aside>

<section class="view" aria-label="3D view">
<svg class="scene" viewBox="275 208 1610 754" preserveAspectRatio="xMidYMid meet">
<defs>
<pattern id="pBack" width="3" height="2" patternUnits="userSpaceOnUse"><rect width="3" height="2" fill="#596f84"/><path d="M0 0h2v1H0zM2 1h1v1H2z" fill="#2ff03c"/></pattern>
<pattern id="pMid" width="7" height="5" patternUnits="userSpaceOnUse"><rect width="7" height="5" fill="#34f53e"/><path d="M0 0h2v1H0zM3 1h2v1H3zM6 2h1v1H6zM1 3h2v1H1zM4 4h2v1H4z" fill="#9a6450"/></pattern>
<pattern id="pFront" width="2" height="2" patternUnits="userSpaceOnUse"><rect width="2" height="2" fill="#14e81c"/><path d="M0 0h1v1H0zM1 1h1v1H1z" fill="#6a6a28"/></pattern>
<pattern id="pTeal" width="2" height="2" patternUnits="userSpaceOnUse"><rect width="2" height="2" fill="#4f9fd4"/><path d="M0 0h1v1H0zM1 1h1v1H1z" fill="#34f53e"/></pattern>
<linearGradient id="gDome" x1="0" x2="0" y1="0" y2="1"><stop offset="0" stop-color="#3f80b8"/><stop offset=".7" stop-color="#52adf0"/><stop offset="1" stop-color="#4793d4"/></linearGradient>
<radialGradient id="gShine"><stop offset="0" stop-color="#90e4ff"/><stop offset="1" stop-color="#52adf0" stop-opacity="0"/></radialGradient>
<clipPath id="cTop"><path d="m1082 474 290 168-290 176-290-176z"/></clipPath>
<clipPath id="cBowl"><ellipse cx="1082" cy="642" rx="54" ry="31"/></clipPath>
</defs>
<path d="M746 660v74l336 193V853z" fill="#306995"/><path d="M1418 660v74l-336 193V853z" fill="#316a96"/>
<path d="M1082 853v74" stroke="#000"/>
<g shape-rendering="crispEdges">
<path d="m1082 450 336 193v21l-336 193-336-193v-21z" fill="url(#pFront)"/>
<path d="m1082 450 336 193-336 180-336-180z" fill="url(#pBack)"/>
<path d="m1082 482 322 168-26 16-296 162-296-162-26-16z" fill="url(#pMid)"/>
</g>
<g id="rings" clip-path="url(#cTop)" fill="none" shape-rendering="crispEdges"></g>
<path d="m746 664 336 193 336-193" fill="none" stroke="#06260a"/>
<path d="m846 623 220-123M1116 509l241 141-267 158" fill="none" stroke="#e048d8" stroke-dasharray="9 2"/>
<path d="m846 612 50-39v-16" fill="none" stroke="#b048d0" stroke-dasharray="2 2"/>
<path d="m916 548 160 94" stroke="#f01010" stroke-dasharray="6 9"/><path d="M902 546v25" stroke="#00dede"/><path d="m902 541 6 2" stroke="#f01010" stroke-width="2"/>
<g shape-rendering="crispEdges">
<path d="m1082 472 53 31v8l-53 31-53-31v-8z" fill="url(#pTeal)"/><path d="m1034 508 48 26 48-26" fill="none" stroke="#123a20" stroke-dasharray="2 2"/>
<ellipse cx="1082" cy="504" rx="20" ry="12" fill="url(#pFront)" stroke="#124d20" stroke-dasharray="2 1"/><ellipse cx="1084" cy="505" rx="7" ry="7" fill="#2ff03c"/>
<path d="m1318 672 43 25v15l-43-25z" fill="url(#pTeal)"/>
<ellipse cx="1360" cy="665" rx="19" ry="12" fill="url(#pTeal)" stroke="#124d20" stroke-dasharray="2 1"/><ellipse cx="1360" cy="666" rx="7" ry="7" fill="#2ff03c"/>
<path d="m1082 800 55 27-55 30-53-30z" fill="url(#pTeal)"/><ellipse cx="1082" cy="825" rx="20" ry="12" fill="url(#pFront)" stroke="#124d20" stroke-dasharray="2 1"/><ellipse cx="1082" cy="826" rx="8" ry="8" fill="#2ff03c"/>
</g>
<path d="m1361 698 57-34v10l-58 38z" fill="#316a96"/><path d="m1351 707 10-6v11z" fill="#8e4a3e"/><path d="m1418 664-57 34v14l-7 3" fill="none" stroke="#000"/>
<path d="m1029 827 53 30 55-30" fill="none" stroke="#0c2c3c"/>
<path d="m1027 826-2 12-13-8zM1137 826l2 12 12-8z" fill="#8e4a3e"/>
<path d="M1088 794v14" stroke="#f01010" stroke-width="2" stroke-dasharray="5 7"/><path d="M1191 796v12" stroke="#00dede"/>
<path d="M975 640q20-45 107-48 87 3 107 48" fill="none" stroke="#92554a" stroke-width="5"/>
<ellipse cx="1082" cy="660" rx="112" ry="66" fill="url(#gDome)" stroke="#2a4b62"/>
<ellipse cx="1004" cy="678" rx="26" ry="14" fill="url(#gShine)"/><ellipse cx="1156" cy="678" rx="26" ry="14" fill="url(#gShine)"/>
<g fill="none" stroke="#2ff03c"><path d="M975 672q20 44 107 46 87-2 107-46M985 686q30 24 97 26 67-2 97-26M996 694q36 13 86 13 50 0 86-13M1000 702q36 14 82 14t82-14"/></g>
<ellipse cx="1082" cy="645" rx="91" ry="52" fill="#4ea6ea" stroke="#16344a"/>
<ellipse cx="1082" cy="643" rx="81" ry="46" fill="#9b5c50" stroke="#000"/>
<ellipse cx="1082" cy="642" rx="54" ry="31" fill="#438ac4" stroke="#000"/>
<g clip-path="url(#cBowl)"><ellipse cx="1082" cy="664" rx="34" ry="12" fill="#2ff03c"/><g fill="none" stroke="#2ff03c"><ellipse cx="1082" cy="643" rx="38" ry="19"/><ellipse cx="1082" cy="647" rx="38" ry="19"/><ellipse cx="1082" cy="651" rx="36" ry="18"/><ellipse cx="1082" cy="655" rx="35" ry="17"/></g><path d="m1045 625 10 40M1118 625l-10 40" stroke="#16344a" stroke-dasharray="4 3"/></g>
<path d="m1140 676 20 30" stroke="#16344a"/>
<path d="M1079 705h6v95h-6z" fill="#2ff03c"/>
<g fill="none" stroke="#16e81c"><ellipse cx="1082" cy="554" rx="27" ry="16"/><path d="m1046 505 10 50M1118 505l-9 50"/><ellipse cx="1082" cy="490" rx="36" ry="26"/></g>
<path d="M1076 548h13v92h-13z" fill="#b9c0a0" fill-opacity=".6"/>
<g fill="none" stroke="#f4f4f4"><path d="m1082 642-57-32h20l4 6zM1082 642l57-32h-20l-6 6z"/><path d="M1082 642v-64l-8 18h16l-8-18"/></g>
<g fill="none" stroke="#c4c4c4"><path d="m1082 646-30-26h8l3 8M1082 646l32-26h-8l-3 8M1078 556v88M1081 556v88M1086 556v88"/></g>
<g fill="none" stroke="#ff0"><ellipse cx="1082" cy="543" rx="14" ry="8"/><path d="M1068.500 543v90M1071.500 547v90M1078.500 550v90M1082.500 536v102M1086.500 550v90M1093.500 547v90M1096.500 543v90"/><ellipse cx="1082" cy="631" rx="14" ry="8"/></g>
<path d="M1085 640v10" stroke="#f01010" stroke-width="2"/><path d="M1088 644v6" stroke="#00dede" stroke-width="2"/>
<g fill="none" stroke="#e06a68"><ellipse cx="1082" cy="431" rx="40" ry="23"/><ellipse cx="1082" cy="499" rx="40" ry="23"/><path d="M1042.500 431v68M1121.500 431v68M1092.500 409v62M1071.500 455v64M1043 494l77 10M1092 475l-20 46"/></g>
<g class="ax" fill="#fff"><text x="1032" y="607">Y</text><text x="1145" y="607">X</text><text x="1090" y="574">Z</text><g fill="#ccc"><text x="1057" y="621">Y</text><text x="1120" y="621">X</text></g></g>
<g fill="none" stroke="#bbb"><path d="m293 905 27 13 27-13" stroke-dasharray="3 2"/><circle cx="295" cy="906" r="3"/><circle cx="344" cy="906" r="3"/></g><path d="M320 900v18" stroke="#00d8dc" stroke-width="2"/>
<g stroke="#6d5f5c" stroke-width=".7"><path d="m1829 231 33 16-33 16-32-16z" fill="#94a0aa"/><path d="m1797 247 32 16v39l-29-20z" fill="#7d8993"/><path d="m1862 247-33 16v39l30-20z" fill="#848f99"/></g>
<path d="m1829 258 6 3v7l-6 3-6-3v-7z" fill="#8296a8"/>
<g class="cubetext"><text x="1819" y="249" transform="rotate(-20 1829 246)">TOP</text><text x="1805" y="276" transform="rotate(22 1815 273)">LEFT</text><text x="1831" y="277" transform="rotate(-26 1846 273)">FRONT</text></g>
</svg>
</section>

<aside class="viewbar">
<button class="tb" aria-label="Machine view"><svg><use href="#machine"/></svg></button><button class="tb" aria-label="Top view"><svg><use href="#vtop"/></svg></button><button class="tb" aria-label="Side view"><svg><use href="#vside"/></svg></button><button class="tb" aria-label="Front view"><svg><use href="#vfront"/></svg></button><button class="tb" aria-label="ISO view"><svg><use href="#viso"/></svg></button>
<button class="tb up" aria-label="Last view"><svg><use href="#zundo"/></svg></button><button class="tb" aria-label="Refresh"><svg><use href="#refresh"/></svg></button><button class="tb" aria-label="Resize to fit"><svg><use href="#zfit"/></svg></button><button class="tb up" aria-label="Zoom box"><svg><use href="#zbox"/></svg></button>
<hr><button class="tb on" aria-label="Block"><svg><use href="#block"/></svg></button><hr>
<button class="tb on" aria-label="Shaded"><svg><use href="#gold"/></svg></button><button class="tb up" aria-label="Wireframe"><svg><use href="#wire"/></svg></button><hr>
<button class="tb up" aria-label="Select box"><svg><use href="#selbox"/></svg></button><button class="tb up" aria-label="Undo selection"><svg><use href="#selundo"/></svg></button>
<button class="x" aria-label="Close bar"></button>
</aside>
</main>

<footer class="status">
<button class="tb" aria-label="Workplane"><svg><use href="#bdnew"/></svg></button><div class="combo w116"><select aria-label="Workplane"><option></option></select></div>
<span class="axes"><button class="tb plane" aria-label="X plane"><svg><use href="#plx"/></svg><b>X</b></button><button class="tb plane" aria-label="Y plane"><svg><use href="#ply"/></svg><b>Y</b></button><button class="tb plane on" aria-label="Z plane"><svg><use href="#plz"/></svg><b>Z</b></button></span>
<svg class="first"><use href="#grid"/></svg><input class="off short" aria-label="Grid" disabled>
<span class="coords"><input value="352.739" aria-label="X"><input value="146.603" aria-label="Y"><input value="0" aria-label="Z"></span>
<svg class="close"><use href="#xyz"/></svg><svg class="close"><use href="#vec"/></svg><input class="off long" aria-label="Message" disabled>
<svg class="first"><use href="#book"/></svg><svg class="first"><use href="#units"/></svg><input value="mm" aria-label="Units">
<svg><use href="#target"/></svg><input value="0.1" aria-label="Tolerance"><svg><use href="#thick"/></svg><input value="0.5" aria-label="Thickness"><svg><use href="#dia"/></svg><input value="20.0" aria-label="Diameter"><svg><use href="#rad"/></svg><input value="0.5" aria-label="Tip radius">
</footer>

<div class="dialog" role="dialog" aria-label="Model Area Clearance">
<div class="dtitle"><b class="logo">P</b><span>Model Area Clearance</span><button class="help" aria-label="Help">?</button><button class="dclose" aria-label="Close"><svg viewBox="0 0 14 14"><path d="m1 1 12 12M13 1 1 13" stroke="#888" fill="none"/></svg></button></div>
<div class="dtop"><button class="sq" disabled aria-label="Recycle"><svg><use href="#recycle"/></svg></button><button class="sq" aria-label="Copy toolpath"><svg><use href="#sheets"/></svg></button><label for="tpname">Toolpath name</label><input id="tpname" value="1"></div>
<div class="dbody">
<div class="dleft">
<div class="treebox"><div class="clip">
<ul class="tree">
<li><div class="row"><span class="g"></span><svg><use href="#axis"/></svg><span class="t">Workplane</span></div></li>
<li><div class="row"><span class="g"></span><svg><use href="#model"/></svg><span class="t">Block</span></div></li>
<li><div class="row"><span class="g"></span><svg><use href="#endmill"/></svg><span class="t">Tool</span></div></li>
<li><div class="row"><span class="g"></span><svg><use href="#machine"/></svg><span class="t">Machine tool</span></div></li>
<li><div class="row"><span class="g"></span><svg><use href="#limit"/></svg><span class="t sel">Limit</span></div></li>
<li><div class="row"><span class="g"><button aria-label="Collapse">−</button></span><svg><use href="#layers"/></svg><span class="t">Model area clearance</span></div>
<ul>
<li><div class="row"><span class="g"></span><svg><use href="#offset"/></svg><span class="t">Offset</span></div></li>
<li><div class="row"><span class="g"></span><svg><use href="#step"/></svg><span class="t">Step cutting</span></div></li>
<li><div class="row"><span class="g"></span><svg><use href="#wall"/></svg><span class="t">Wall finishing</span></div></li>
<li><div class="row"><span class="g"></span><svg><use href="#unsafe"/></svg><span class="t">Unsafe segment remov</span></div></li>
<li><div class="row"><span class="g"></span><svg><use href="#flat"/></svg><span class="t">Flat machining</span></div></li>
<li><div class="row"><span class="g"></span><svg><use href="#speed"/></svg><span class="t">High speed</span></div></li>
<li><div class="row"><span class="g"></span><svg><use href="#order"/></svg><span class="t">Order</span></div></li>
<li><div class="row"><span class="g"></span><svg><use href="#approach"/></svg><span class="t">Approach</span></div></li>
<li><div class="row"><span class="g"></span><svg><use href="#tcalc"/></svg><span class="t">Automatic verification</span></div></li>
</ul></li>
<li><div class="row"><span class="g"></span><svg><use href="#cutter"/></svg><span class="t">Cutter compensation</span></div></li>
<li><div class="row"><span class="g"></span><svg><use href="#pdist"/></svg><span class="t">Point distribution</span></div></li>
<li><div class="row"><span class="g"></span><svg><use href="#taxis"/></svg><span class="t">Tool axis</span></div></li>
<li><div class="row"><span class="g"></span><svg><use href="#compass"/></svg><span class="t">Machine axis control</span></div></li>
<li><div class="row"><span class="g"><button aria-label="Collapse">−</button></span><svg><use href="#rapid"/></svg><span class="t">Rapid Moves</span></div>
<ul><li><div class="row"><span class="g"></span><svg><use href="#rapid"/></svg><span class="t">Moves and clearances</span></div></li></ul></li>
<li class="more"><div class="row"><span class="g"><button aria-label="Collapse">−</button></span><svg><use href="#leads"/></svg><span class="t">Leads and links</span></div>
<ul><li><div class="row"><span class="g"></span><svg><use href="#leads"/></svg><span class="t">Lead in</span></div></li>
<li class="more"><div class="row"><span class="g"></span><svg><use href="#leads"/></svg></div></li></ul></li>
</ul>
</div><i class="vthumb"></i><i class="hthumb"></i></div>
<svg class="preview" viewBox="160 748 180 140">
<defs><filter id="soft" x="-20%" y="-20%" width="140%" height="140%"><feGaussianBlur stdDeviation="5"/></filter></defs>
<path d="m180 828 62-28 84 22-84 58z" fill="#888" filter="url(#soft)"/>
<path d="m177 797 88-42 63 29-3 31-85 54-60-40z" fill="#a4a4a4" fill-opacity=".45"/>
<path d="m179 829 61 40 85-54-60-22z" fill="#8d8d8d" fill-opacity=".8"/>
<path d="m177 797 63 39 88-52-63-29z" fill="#c2c2c2" fill-opacity=".6"/>
<path d="m194 789-2 18M215 779l-3 38M234 770l-1 61M254 760v12M272 759v12M292 769v34M311 776l4 17M254 817v12M274 804v12" stroke="#999" stroke-width="3"/>
<path d="m209 799 56-29 30 15-55 31z" fill="#cb9cf5" stroke="#fff" stroke-width="2"/>
<path d="M234 786v26M254 777v31M273 774v22M214 797v4M292 782v4" stroke="#2bb82b" stroke-width="2"/>
<path d="m177 797 88-42 63 29-3 31-85 54-60-40zM177 797l63 39 88-52M240 836v33" fill="none" stroke="#333"/><path d="m180 829 35-15M325 815l-35-20" stroke="#777"/>
</svg>
</div>
<form class="dform">
<h2>Limit</h2>
<fieldset class="fs boundary"><legend>Boundary</legend>
<div class="line">
<div class="combo w51 box"><svg><use href="#bdnew"/></svg><select aria-label="Create boundary"><option></option></select></div>
<div class="combo w228 box pale"><select aria-label="Boundary"><option></option></select></div>
<span class="tools2"><button type="button" class="mini" disabled aria-label="Edit curve"><svg><use href="#bdpen"/></svg></button><button type="button" class="mini" disabled aria-label="Edit"><svg><use href="#pencil"/></svg></button></span>
</div>
<div class="two"><div><label for="lim">Limit</label><div class="combo w51 box dis"><svg><use href="#noclover"/></svg><select id="lim" disabled><option></option></select></div></div>
<div><label for="trim">Trimming</label><div class="combo w146 box dis"><select id="trim" disabled><option>Keep inside</option></select></div></div></div>
</fieldset>
<fieldset class="fs blk"><legend>Block</legend><div class="blkrow"><label for="blim">Limit</label><div class="combo w51 box"><svg><use href="#clover"/></svg><select id="blim"><option></option></select></div></div></fieldset>
<fieldset class="fs zl"><legend>Z limits</legend>
<div class="zbody">
<fieldset class="fs inner"><legend><label><input type="checkbox">Maximum</label></legend><div class="irow"><button type="button" class="mini" disabled aria-label="Pick maximum"><svg><use href="#plane"/></svg></button><input class="num" value="50.0" disabled aria-label="Maximum Z"></div></fieldset>
<fieldset class="fs inner"><legend><label><input type="checkbox">Minimum</label></legend><div class="irow"><button type="button" class="mini" disabled aria-label="Pick minimum"><svg><use href="#plane"/></svg></button><input class="num" value="-50.0" disabled aria-label="Minimum Z"></div></fieldset>
</div>
</fieldset>
<div class="actions"><button type="button" class="calcb">Calculate</button><button type="button">Queue</button><button type="button">OK</button><button type="button" class="def">Cancel</button></div>
</form>
</div>
</div>
<script src="scene.js"></script>
</body>
</html>
```

FILE: scene.js
```js
// Draws the offset passes of the clearance toolpath around the boss.
const rings = document.getElementById("rings");
const NS = "http://www.w3.org/2000/svg";
function ring(cy, rx, ry, color, dash, width) {
  const e = document.createElementNS(NS, "ellipse");
  e.setAttribute("cx", 1082);
  e.setAttribute("cy", cy);
  e.setAttribute("rx", rx);
  e.setAttribute("ry", ry);
  e.setAttribute("stroke", color);
  e.setAttribute("stroke-width", width);
  if (dash) e.setAttribute("stroke-dasharray", dash);
  rings.appendChild(e);
}
for (let r = 113; r < 290; r += 6) {
  const k = (r - 113) / 180;
  const ry = r * (0.62 - k * 0.03);
  const cy = 655 - k * 12;
  ring(cy, r, ry, "#34f53e", "", k < 0.35 ? 5 : k < 0.6 ? 3 : 2);
  if (k < 0.55) {
    const dash = r < 150 ? "" : `${Math.round(70 - k * 110)} ${3 + Math.round(k * 14)}`;
    ring(cy, r + 3, ry + 2, "#92594a", dash, 1);
  }
}
ring(662, 160, 107, "#123c22", "3 3", 1);
```

FILE: styles.css
```css
* { box-sizing: border-box; }
html, body { height: 100%; margin: 0; }
body { display: flex; flex-direction: column; padding: 2px 0 3px 2px; background: #fff; font: 14px/20px "Open Sans", "Noto Sans", sans-serif; color: #000; overflow: hidden; position: relative; }
button, input, select { font: inherit; color: inherit; }
button { padding: 0; }
i { font-style: normal; }
.defs { position: absolute; width: 0; height: 0; }

.titlebar { display: flex; gap: 80px; height: 9px; padding-left: 268px; background: #eff2fa; overflow: hidden; line-height: 1px; }
.titlebar span { line-height: 20px; margin-top: -15px; }
.menu { display: flex; gap: 19px; height: 25px; align-items: center; padding-left: 2px; background: #fff; flex: none; }
.menu a { color: #000; text-decoration: none; }

.dock { background: #efefef; border-top: 1px solid #a0a0a0; flex: none; }
.dockrow { display: flex; height: 34px; overflow: hidden; }
.bar { display: flex; align-items: center; height: 34px; border-right: 1px solid #a0a0a0; border-bottom: 1px solid #a0a0a0; border-top: 1px solid #fff; padding: 0 2px 0 4px; flex: none; }
.bar.cut { padding-left: 0; margin-left: -6px; }
.bar.flush { padding-left: 0; }
.bar.w850 { width: 854px; }
.bar.wide { gap: 7px; }
.bar.wide .sep { margin: 0 -3px; }
.tb { width: 25px; height: 28px; border: 1px solid transparent; border-radius: 3px; background: none; display: grid; place-items: center; flex: none; position: relative; }
.tb svg { width: 21px; height: 21px; }
.tb.on { background: #cce8ff; border-color: #99d1ff; }
.tb:disabled svg, .tb svg.dim { filter: grayscale(1); opacity: .45; }
.sep { width: 2px; height: 28px; margin: 0 4px; border-left: 1px solid #a0a0a0; border-right: 1px solid #fff; flex: none; }
.gap4 { width: 4px; }
.gap10 { width: 10px; }
.gap18 { width: 18px; }
.x { width: 17px; height: 17px; margin: 0; border: 0; background: #fff; flex: none; display: grid; place-items: center; }
.x.far { margin: 0 2px 0 8px; }
.wide .x { margin-left: -7px; }
.x::before { content: "×"; font: bold 16px/14px "Open Sans", sans-serif; color: #6b7a90; }

.combo { position: relative; display: flex; align-items: center; height: 26px; background: #fff; border-radius: 2px; flex: none; }
.combo svg { width: 21px; height: 21px; margin-left: 4px; flex: none; }
.combo select { appearance: none; border: 0; background: none; flex: 1; min-width: 0; height: 24px; padding: 0 4px; outline: 0; opacity: 1; }
.combo::after { content: ""; position: absolute; right: 8px; top: 7px; width: 6px; height: 6px; border: solid #555; border-width: 0 1px 1px 0; transform: rotate(45deg); }
.combo.tight { background: linear-gradient(90deg, #efefef 26px, #fff 26px); }
.filled { background: linear-gradient(90deg, #efefef 234px, #fff 234px); border: 1px solid #fff; margin-left: 2px; }
.filled select { padding-left: 2px; }
.w158 select { padding-left: 0; }
.w49 { width: 49px; } .w51 { width: 51px; } .w116 { width: 118px; } .w146 { width: 146px; } .w158 { width: 158px; } .w162 { width: 162px; } .w228 { width: 228px; } .w258 { width: 258px; }

.work { flex: 1; display: flex; min-height: 0; border-top: 1px solid #8c8c8c; background: #efefef; }
.explorer { width: 272px; padding-right: 9px; display: flex; flex-direction: column; flex: none; }
.grip { height: 18px; margin-right: 4px; background: linear-gradient(#efefef 7px, #a0a0a0 7px 8px, #fff 8px 10px, #a0a0a0 10px 11px, #efefef 11px 16px, #888 16px); flex: none; }
.tabs { display: flex; height: 39px; border-bottom: 1px solid #a0a0a0; background: linear-gradient(#efefef 35px, #8a96a0 35px 36px, #fff 36px); flex: none; }
.tab { width: 33px; height: 35px; border: 1px solid #ddd; background: #f3f3f3; display: grid; place-items: center; }
.tab.cur { width: 39px; height: 39px; background: #fff; border-color: #fff; }
.tab svg { width: 22px; height: 22px; }

.tree, .tree ul { list-style: none; margin: 0; padding: 0; }
.tree ul { padding-left: 19px; }
.tree li { position: relative; }
.tree li::before { content: ""; position: absolute; left: 9px; top: 0; bottom: 0; border-left: 1px dotted #777; }
.tree li:last-child::before { bottom: auto; height: 11px; }
.tree li.more::before { bottom: 0; height: auto; }
.tree.side { flex: 1; margin: 0 0 3px -1px; padding-top: 2px; background: #fff; border-right: 1px solid #ddd; border-bottom: 1px solid #ddd; overflow: hidden; }
.row { display: flex; align-items: center; height: 22px; white-space: nowrap; }
.row svg { width: 17px; height: 17px; margin: 0 1px; flex: none; }
.row svg.s { width: 15px; height: 16px; margin: 0 -1px 0 0; }
.pad { width: 19px; }
.g { width: 19px; height: 22px; display: grid; place-items: center; position: relative; flex: none; }
.g::before { content: ""; position: absolute; left: 9px; right: 0; top: 11px; border-top: 1px dotted #777; }
.g button { width: 11px; height: 11px; border: 1px solid #8c8c8c; background: #fff; font: 12px/8px "Open Sans", sans-serif; color: #2a3f90; position: relative; }
.t { padding: 0 4px; line-height: 22px; }
.b { font-weight: 600; }
.sel { background: #efefef; }

.view { flex: 1; min-width: 0; border-left: 1px solid #777; background: linear-gradient(#2f475b, #1d2a33 45%, #000 92%); overflow: hidden; }
.scene { width: 100%; height: 100%; display: block; }
.ax text { font: bold 12px "Liberation Sans", sans-serif; }
.cubetext text { font: bold 9px "Liberation Sans", sans-serif; fill: #545f69; }
.viewbar { width: 31px; padding: 3px 0 0 2px; border-left: 2px solid #fff; flex: none; }
.viewbar .tb { height: 24px; }
.viewbar .tb.up { margin-top: 7px; }
.viewbar hr { margin: 9px 0 4px; border: 0; height: 2px; background: #a0a0a0; }
.viewbar .x { margin: 6px 0 0; }

.status { display: flex; align-items: center; height: 39px; background: #efefef; border-top: 1px solid #fff; border-bottom: 1px solid #a0a0a0; flex: none; }
.status > .tb { margin: 0 3px 0 -5px; }
.axes { display: flex; gap: 2px; margin-left: 4px; }
.plane b { position: absolute; left: 1px; top: -3px; font: bold 14px/18px "Liberation Sans", sans-serif; -webkit-text-stroke: 1px #333; color: #bfe6f7; }
.status > svg { width: 21px; height: 21px; margin: 0 5px; flex: none; }
.status > svg.first { margin-left: 12px; }
.status > svg.close { margin: 0 4px 0 3px; }
.status input { width: 74px; height: 29px; padding: 0 6px; border: 1px solid #fff; border-bottom: 1px solid #777; background: #efefef; border-radius: 2px; flex: none; }
.status input.off { border-bottom-color: #fff; }
.status input.short { width: 68px; }
.status input.long { width: 118px; }
.coords { display: flex; gap: 5px; margin: 0 4px 0 15px; }

.dialog { position: absolute; left: 122px; top: 118px; width: 724px; height: 787px; background: #f0f0f0; border: 1px solid #a8a8a8; border-radius: 9px; box-shadow: 0 12px 36px rgba(0, 0, 0, .35); display: flex; flex-direction: column; overflow: hidden; }
.dtitle { display: flex; align-items: center; height: 36px; padding: 0 20px 0 11px; background: #f3f3f3; color: #8a8a8a; flex: none; }
.logo { width: 16px; margin-right: 8px; background: #fbe8d6; color: #b86a14; font-size: 17px; text-align: center; line-height: 18px; }
.help { margin-left: auto; border: 0; background: none; color: #888; font-size: 16px; width: 20px; }
.dclose { margin-left: 38px; border: 0; background: none; width: 20px; height: 20px; display: grid; place-items: center; }
.dclose svg { width: 14px; height: 14px; }
.dtop { display: flex; align-items: center; height: 51px; padding: 3px 15px 0 11px; flex: none; }
.sq { width: 30px; height: 31px; margin-right: 7px; border: 1px solid #ccc; border-radius: 4px; background: #fbfbfb; display: grid; place-items: center; }
.sq:disabled { border-color: #e8e8e8; background: #f4f4f4; }
.sq svg { width: 26px; height: 26px; }
.dtop label { margin-left: auto; margin-right: 12px; }
.dtop input { width: 446px; height: 24px; padding: 0 6px; border: 1px solid #e4e4e4; border-bottom: 1px solid #777; background: #fff; border-radius: 2px; }
.dbody { display: flex; gap: 11px; padding: 0 14px 0 10px; flex: 1; }
.dleft { width: 239px; flex: none; }
.treebox { position: relative; height: 536px; margin-top: 1px; padding: 2px; border: 1px solid #828790; background: #f0f0f0; }
.clip { width: 215px; height: 512px; overflow: hidden; background: #fff; }
.vthumb { position: absolute; right: 10px; top: 21px; width: 3px; height: 310px; background: #888; border-radius: 2px; }
.hthumb { position: absolute; left: 22px; bottom: 10px; width: 163px; height: 3px; background: #888; border-radius: 2px; }
.preview { display: block; width: 180px; height: 140px; margin: 5px 0 0 26px; }
.dform { flex: 1; display: flex; flex-direction: column; padding-top: 2px; }
.dform h2 { margin: 0 0 28px; height: 32px; padding: 0 3px; border: 1px solid #222; border-radius: 4px 4px 0 0; box-shadow: inset 0 -1px #3fc4dc; background: linear-gradient(#98b3d2, #b2cce9); font: 16px/30px "Open Sans", sans-serif; flex: none; }
.fs { margin: 0; border: 1px solid #dcdcdc; min-width: 0; padding: 0; }
.fs legend { padding: 0 5px 0 3px; margin-left: 6px; height: 20px; line-height: 20px; }
.boundary { width: 434px; height: 163px; margin-bottom: 9px; }
.blk { width: 434px; height: 68px; margin-bottom: 12px; }
.blkrow { display: flex; justify-content: flex-end; align-items: center; gap: 11px; padding: 3px 20px 0 0; }
.zl { width: 434px; height: 191px; }
.zbody { padding: 2px 11px 0 163px; }
.inner { height: 67px; margin-bottom: 13px; }
.irow { display: flex; justify-content: flex-end; align-items: flex-start; gap: 16px; padding: 1px 12px 0 0; }
.inner legend { padding: 0 8px 0 4px; }
.inner legend label { display: flex; gap: 4px; align-items: center; }
.inner legend input { appearance: none; width: 16px; height: 16px; margin: 0 0 0 1px; border: 1px solid #555; border-radius: 3px; background: #f6f6f6; }
.mini { width: 23px; height: 23px; border: 1px solid #e6e6e6; border-radius: 4px; background: #f8f8f8; display: grid; place-items: center; flex: none; }
.mini svg { width: 20px; height: 20px; filter: grayscale(1); opacity: .6; }
.num { width: 78px; height: 26px; margin-top: 3px; padding: 0 5px; border: 1px solid #fbfbfb; background: #f0f0f0; color: #777; flex: none; }
.line { display: flex; align-items: flex-start; padding: 10px 13px 0 13px; }
.line .w228 { margin: 2px 0 0 17px; }
.tools2 { display: flex; gap: 13px; margin: 3px 0 0 auto; }
.box { height: 28px; border: 1px solid #7d7d7d; border-radius: 2px; }
.box.pale { border-color: #b4b4b4; }
.box.dis { border-color: #c4c4c4; }
.box svg { margin-left: 3px; background: #efefef; }
.dis select, .dis::after { color: #777; border-color: #aaa; }
.w146.dis { background: linear-gradient(90deg, #efefef 122px, #fff 122px); }
.two { display: flex; justify-content: space-between; padding: 22px 15px 0 19px; color: #9a9a9a; }
.two label { display: block; margin: 0 0 9px 2px; }
.actions { display: flex; gap: 9px; margin: auto 0 7px 1px; }
.actions button { width: 58px; height: 26px; border: 1px solid #ccc; border-radius: 4px; background: #fdfdfd; }
.actions .calcb { width: 77px; }
.actions .def { border-color: #0078d4; }
```
